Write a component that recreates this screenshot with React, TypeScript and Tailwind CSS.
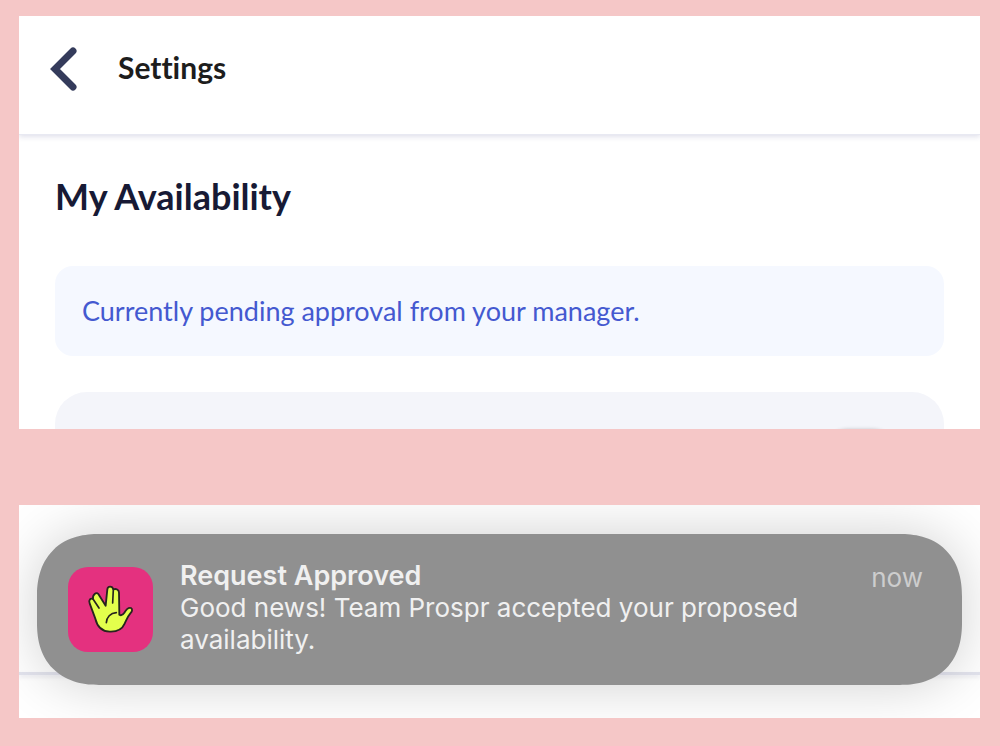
function BackIcon() {
  return (
    <svg viewBox="0 0 28 46" className="h-[46px] w-7" fill="none" aria-hidden="true">
      <path
        d="M23 5 5 23l18 18"
        stroke="#343b5b"
        strokeWidth="7"
        strokeLinecap="round"
        strokeLinejoin="miter"
      />
    </svg>
  );
}

function HandLogo() {
  return (
    <svg viewBox="24 20 255 255" className="size-full" role="img" aria-label="Team Prospr">
      <path
        d="M106 175 L89 129 C85 119 92 112 99 116 C97 103 109 94 115 101 L137 136 L142 87 C143 76 157 76 160 87 C168 84 177 88 177 97 L178 163 C184 167 189 163 193 157 C199 147 207 141 213 143 C219 147 216 154 211 159 C203 168 200 178 194 190 C187 206 171 215 149 214 C126 213 112 200 106 175 Z"
        fill="#e3ff4c"
        stroke="#26251d"
        strokeWidth="5.5"
        strokeLinejoin="round"
      />
      <path
        d="M99 116 L117 143 M160 87 L158 128 M139 187 C140 171 151 158 169 157"
        fill="none"
        stroke="#26251d"
        strokeWidth="5"
        strokeLinecap="round"
      />
    </svg>
  );
}

function SettingsPanel() {
  return (
    <section className="h-[413px] overflow-hidden bg-white font-['Lato',sans-serif] [font-variant-ligatures:none]">
      <header className="flex h-[119px] items-center gap-10 border-b border-[#e8e9f2] px-[31px] pb-3 shadow-[0_2px_5px_rgba(70,70,130,0.16)]">
        <button type="button" aria-label="Back">
          <BackIcon />
        </button>
        <h1 className="pb-1 text-[30px] leading-9 font-bold text-[#1d1d1d]">Settings</h1>
      </header>
      <div className="px-9 pt-[39px]">
        <h2 className="text-[36px] leading-[44px] font-bold text-[#171a35]">My Availability</h2>
        <p className="mt-12 rounded-[18px] bg-[#f5f8ff] px-[27px] py-[27px] text-[27px] leading-9 text-[#4459d0]">
          Currently pending approval from your manager.
        </p>
        <div className="relative mt-9 h-40 rounded-[32px] bg-[#f4f5fa]">
          <div className="absolute top-[38px] right-12 h-12 w-[72px] rounded-full bg-white shadow-[0_0_4px_rgba(0,0,0,0.3)]" />
        </div>
      </div>
    </section>
  );
}

function NotificationPanel() {
  return (
    <section className="relative h-[213px] overflow-hidden bg-white px-[18px] pt-[29px]">
      <div className="absolute inset-x-0 top-[167px] h-[3px] bg-[#e3e4ee] shadow-[0_2px_4px_rgba(70,70,130,0.12)]" />
      <article className="relative flex h-[151px] items-start rounded-[62px] bg-[#909090] pt-[33px] pr-[39px] pl-[31px] font-['Inter',sans-serif] text-[26px] leading-8 text-[#f0f0f0] shadow-[0_0_56px_rgba(0,0,0,0.19)] [corner-shape:superellipse(1.2)]">
        <div className="size-[85px] shrink-0 overflow-hidden rounded-[20px] bg-[#e4317f]">
          <HandLogo />
        </div>
        <div className="-mt-[7px] ml-[27px] flex-1">
          <h3 className="text-[27px] leading-8 font-semibold">Request Approved</h3>
          <p>Good news! Team Prospr accepted your proposed availability.</p>
        </div>
        <time className="-mt-[5px] text-[#cdcdcd]">now</time>
      </article>
    </section>
  );
}

export default function App() {
  return (
    <main className="flex min-h-screen flex-col gap-[76px] bg-[#f5c7c7] pt-4 pr-5 pb-7 pl-[19px]">
      <SettingsPanel />
      <NotificationPanel />
    </main>
  );
}
